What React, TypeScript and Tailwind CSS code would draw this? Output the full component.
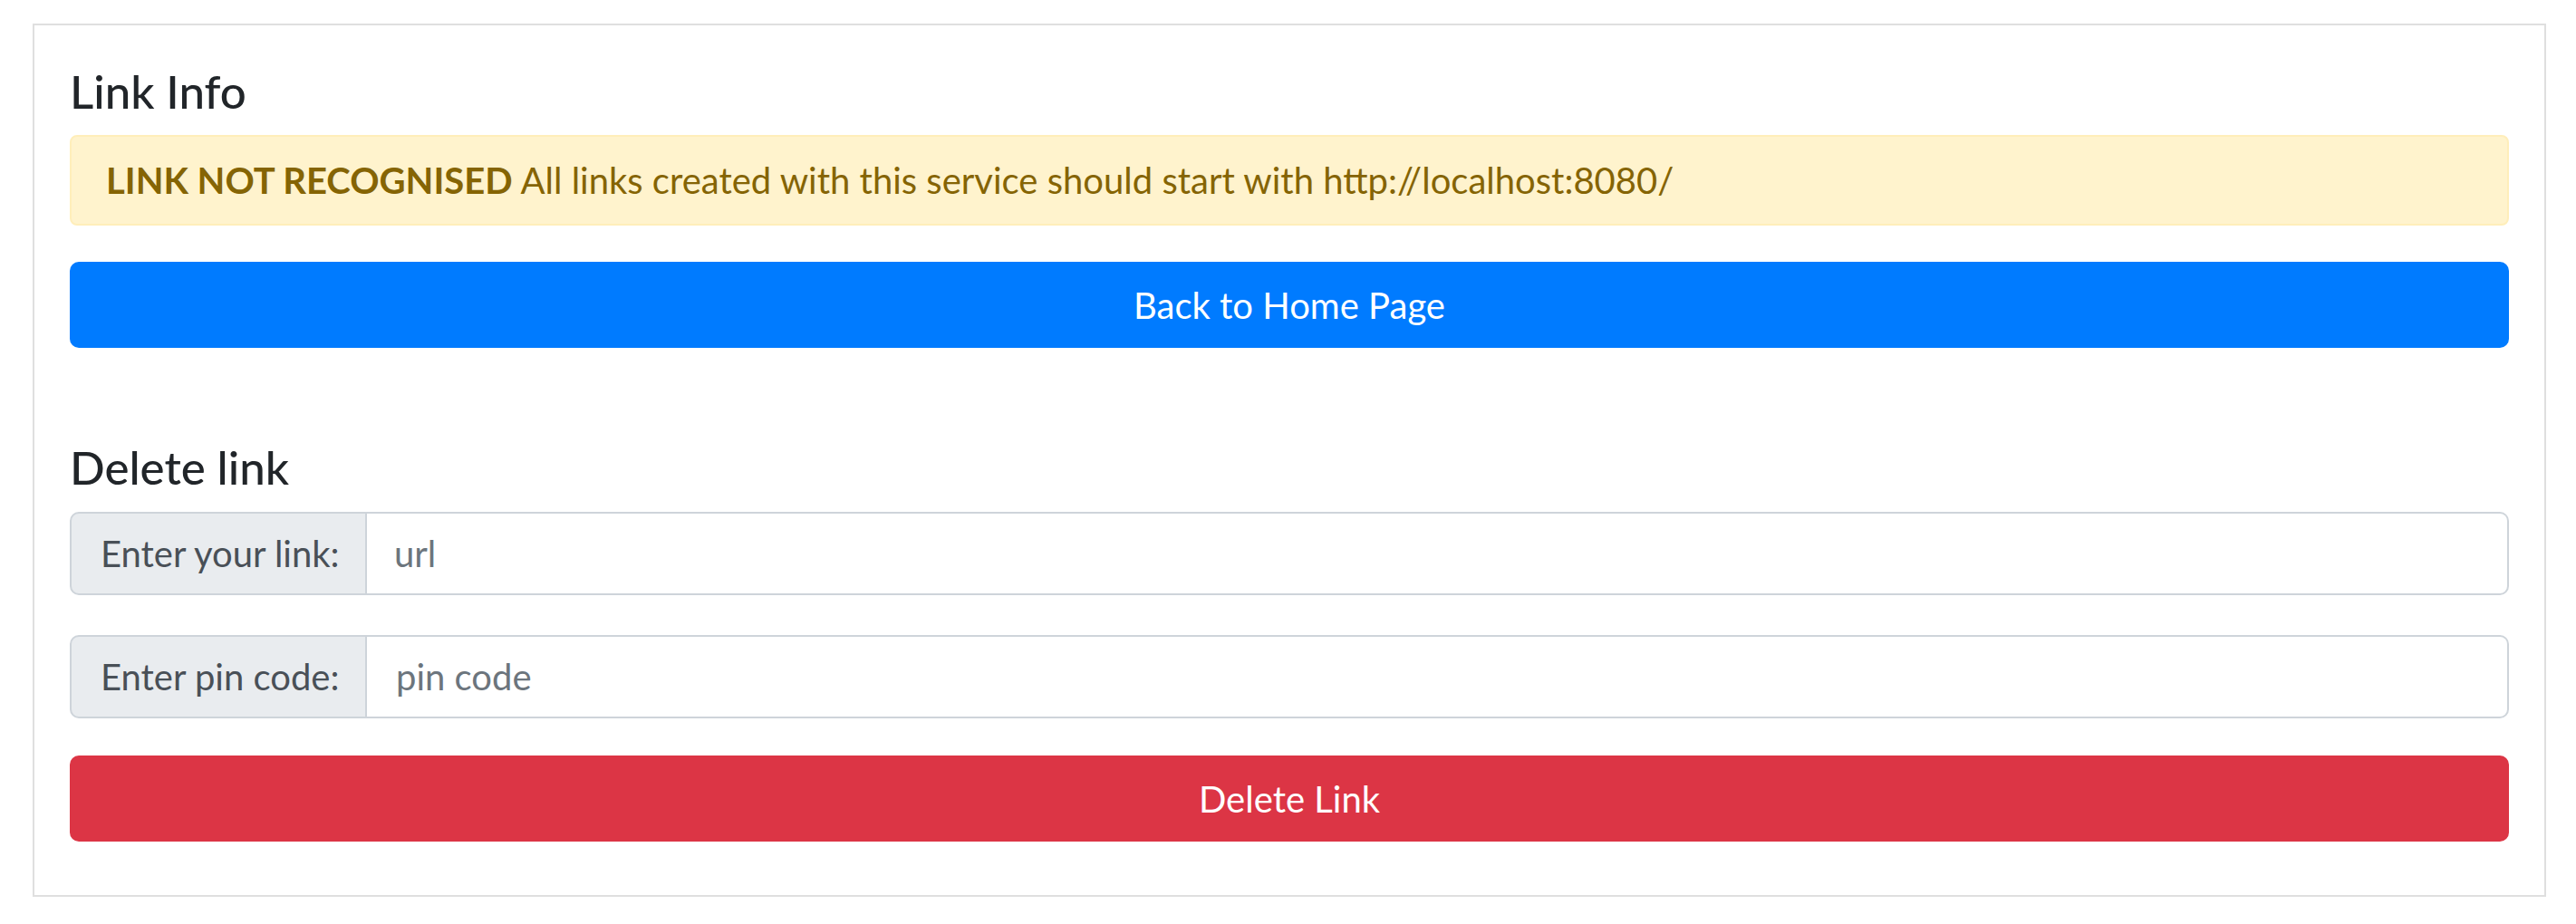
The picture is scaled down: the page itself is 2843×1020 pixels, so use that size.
import React from "react";

export default function App() {
  return (
    <div
      className="w-[2843px] h-[1020px] bg-white pt-[26px] pl-[36px]"
      style={{ fontFamily: "Lato, 'Open Sans', sans-serif" }}
    >
      <div className="w-[2774px] h-[964px] border-2 border-[#dfdfdf] px-[39px] pt-[39px] flex flex-col">
        <h3 className="text-[51px] leading-[67px] text-[#212529] font-medium m-0">Link Info</h3>
        <div className="mt-[15px] h-[100px] border-2 border-[#ffeeba] bg-[#fff3cd] rounded-[8px] px-[38px] pt-[24px] text-[#856404] text-[40px] leading-[48px] whitespace-nowrap">
          <span className="font-bold">LINK NOT RECOGNISED</span> All links created with this service should start with http://localhost:8080/
        </div>
        <button className="mt-[40px] h-[95px] w-full bg-[#007bff] text-white text-[40px] leading-[48px] rounded-[10px] flex items-center justify-center">
          Back to Home Page
        </button>
        <h3 className="mt-[98px] text-[51px] leading-[67px] text-[#212529] font-medium m-0">Delete link</h3>
        <div className="mt-[16px] h-[92px] flex">
          <div className="h-full w-[328px] shrink-0 bg-[#e9ecef] border-2 border-[#ced4da] rounded-l-[10px] pl-[32px] flex items-center text-[#495057] text-[40px] leading-[48px] whitespace-nowrap">
            Enter your link:
          </div>
          <div className="h-full flex-1 border-2 border-l-0 border-[#ced4da] rounded-r-[10px] pl-[30px] flex items-center text-[#6c757d] text-[40px] leading-[48px]">
            url
          </div>
        </div>
        <div className="mt-[44px] h-[92px] flex">
          <div className="h-full w-[328px] shrink-0 bg-[#e9ecef] border-2 border-[#ced4da] rounded-l-[10px] pl-[32px] flex items-center text-[#495057] text-[40px] leading-[48px] whitespace-nowrap">
            Enter pin code:
          </div>
          <div className="h-full flex-1 border-2 border-l-0 border-[#ced4da] rounded-r-[10px] pl-[32px] flex items-center text-[#6c757d] text-[40px] leading-[48px]">
            pin code
          </div>
        </div>
        <button className="mt-[41px] h-[95px] w-full bg-[#dc3545] text-white text-[40px] leading-[48px] rounded-[10px] flex items-center justify-center">
          Delete Link
        </button>
      </div>
    </div>
  );
}
